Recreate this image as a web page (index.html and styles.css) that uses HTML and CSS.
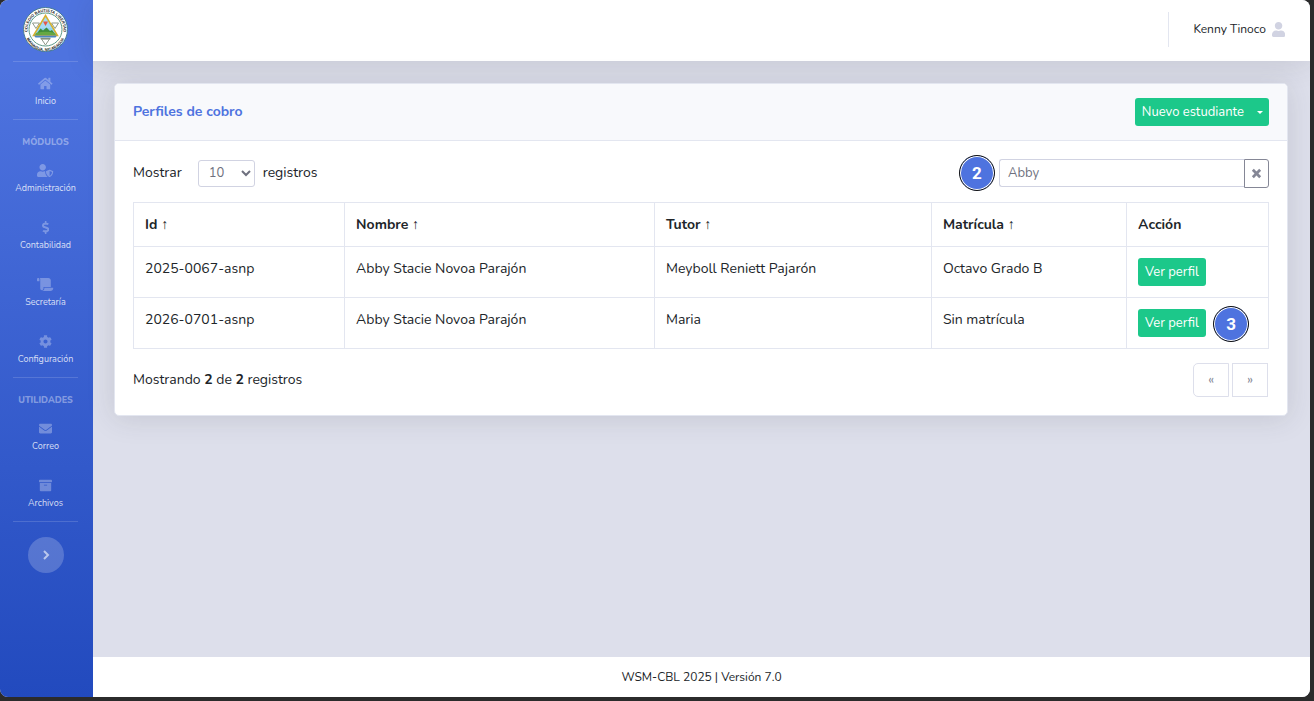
FILE: index.html
```html
<!DOCTYPE html>
<html lang="es">
<head>
<meta charset="utf-8">
<meta name="viewport" content="width=device-width, initial-scale=1">
<title>Perfiles de cobro</title>
<link rel="stylesheet" href="styles.css">
</head>
<body>
<div class="window">
  <nav class="sidebar" aria-label="Principal">
    <a class="brand" href="#" aria-label="Colegio Bautista Libertad">
      <svg class="crest" viewBox="0 0 90 90" aria-hidden="true">
        <defs>
          <path id="ring-top" d="M9.500 52a36 36 0 1 1 71 0"/>
          <path id="ring-bottom" d="M4 47a41 41 0 0 0 82 0"/>
        </defs>
        <circle cx="45" cy="45" r="44" fill="#fff" stroke="#497d94" stroke-width="2"/>
        <circle cx="45" cy="45" r="33" fill="#fff" stroke="#5e9987" stroke-width="2"/>
        <text class="crest-text"><textPath href="#ring-top" startOffset="50%" text-anchor="middle">COLEGIO BAUTISTA LIBERTAD</textPath></text>
        <text class="crest-text"><textPath href="#ring-bottom" startOffset="50%" text-anchor="middle">MANAGUA, NICARAGUA</textPath></text>
        <path d="M19 32h14l-7 11zM57 32h14l-7 11zM37 64h16l-8 12z" fill="#fff" stroke="#8f9a8c" stroke-width="2"/>
        <path d="M45 17L69 57H21z" fill="#8fd3f0" stroke="#d8b02c" stroke-width="3"/>
        <path d="M45 21l12 21H33z" fill="#a6daf3"/>
        <path d="M40 29h10l-5 9z" fill="#e3574d"/>
        <path d="M27 54l8-11 5 4 7-6 7 7 4-2 6 8z" fill="#3f8d3c"/>
        <path d="M26 52q19-5 38 0l2 4H24z" fill="#65a843"/>
        <path d="M22 57h46l-3 4H25z" fill="#4c87c2"/>
        <path d="M35 63h20" stroke="#82907e" stroke-width="3"/>
      </svg>
    </a>
    <hr class="rule">
    <a class="nav-item" href="#">
      <svg viewBox="0 0 576 512" aria-hidden="true"><path d="M280.370 148.260L96 300.110V464a16 16 0 0 0 16 16l112.060-.29a16 16 0 0 0 15.920-16V368a16 16 0 0 1 16-16h64a16 16 0 0 1 16 16v95.640a16 16 0 0 0 16 16.050L464 480a16 16 0 0 0 16-16V300L295.670 148.260a12.190 12.190 0 0 0-15.300 0zM571.600 251.470L488 182.560V44.050a12 12 0 0 0-12-12h-56a12 12 0 0 0-12 12v72.610L318.470 43a48 48 0 0 0-61 0L4.340 251.470a12 12 0 0 0-1.600 16.900l25.500 31A12 12 0 0 0 45.150 301l235.220-193.740a12.190 12.190 0 0 1 15.300 0L530.900 301a12 12 0 0 0 16.900-1.600l25.500-31a12 12 0 0 0-1.700-16.930z"/></svg>
      <span>Inicio</span>
    </a>
    <hr class="rule">
    <h2 class="nav-heading">Módulos</h2>
    <a class="nav-item" href="#">
      <svg viewBox="0 0 640 512" aria-hidden="true"><path d="M622.300 271.100l-115.200-45c-4.100-1.600-12.600-3.700-22.200 0l-115.200 45c-10.700 4.200-17.700 14-17.700 24.900 0 111.600 68.700 188.800 132.900 213.900 9.600 3.700 18 1.600 22.200 0C558.400 489.900 640 420.500 640 296c0-10.900-7-20.700-17.700-24.900zM496 462.400V273.300l95.500 37.300c-5.600 87.100-60.900 135.400-95.500 151.800zM224 256c70.700 0 128-57.300 128-128S294.700 0 224 0 96 57.300 96 128s57.300 128 128 128zm96 40c0-2.500.8-4.800 1.100-7.200-2.500-.1-4.900-.8-7.500-.8h-16.700c-22.200 10.200-46.900 16-72.900 16s-50.600-5.800-72.900-16h-16.700C60.200 288 0 348.200 0 422.400V464c0 26.500 21.500 48 48 48h352c6.800 0 13.300-1.500 19.200-4-54-42.900-99.200-116.700-99.200-212z"/></svg>
      <span>Administración</span>
    </a>
    <a class="nav-item" href="#">
      <svg viewBox="0 0 288 512" aria-hidden="true"><path d="M209.200 233.400l-108-31.600C88.700 198.200 80 186.500 80 173.500c0-16.300 13.200-29.500 29.500-29.500h66.300c12.200 0 24.200 3.700 34.200 10.500 6.100 4.100 14.300 3.100 19.500-2l34.800-34c7.100-6.900 6.100-18.400-1.800-24.500C238 74.800 207.400 64.100 176 64V16c0-8.800-7.200-16-16-16h-32c-8.800 0-16 7.200-16 16v48h-2.500C45.800 64-5.400 118.700.5 183.600c4.200 46.100 39.400 83.600 83.800 96.600l102.500 30c12.500 3.700 21.200 15.300 21.200 28.300 0 16.300-13.200 29.500-29.500 29.500h-66.300C100 368 88 364.300 78 357.500c-6.100-4.100-14.300-3.100-19.500 2l-34.800 34c-7.100 6.900-6.100 18.400 1.800 24.500 24.500 19.200 55.100 29.900 86.500 30v48c0 8.800 7.200 16 16 16h32c8.800 0 16-7.200 16-16v-48.200c46.600-.9 90.300-28.600 105.700-72.700 21.500-61.600-14.600-124.800-72.500-141.700z"/></svg>
      <span>Contabilidad</span>
    </a>
    <a class="nav-item" href="#">
      <svg viewBox="0 0 640 512" aria-hidden="true"><path d="M48 0C21.530 0 0 21.530 0 48v64c0 8.840 7.160 16 16 16h80V48C96 21.530 74.470 0 48 0zm208 412.570V352h288V96c0-52.940-43.060-96-96-96H111.590C121.740 13.410 128 29.920 128 48v368c0 38.870 34.650 69.650 74.750 63.120C234.220 474 256 444.460 256 412.570zM288 384v32c0 52.930-43.060 96-96 96h336c61.860 0 112-50.140 112-112 0-8.840-7.160-16-16-16H288z"/></svg>
      <span>Secretaría</span>
    </a>
    <a class="nav-item" href="#">
      <svg viewBox="0 0 512 512" aria-hidden="true"><path d="M487.400 315.700l-42.600-24.600c4.300-23.200 4.300-47 0-70.200l42.600-24.600c4.900-2.800 7.100-8.600 5.500-14-11.100-35.600-30-67.800-54.700-94.600-3.800-4.100-10-5.100-14.800-2.300L380.800 110c-17.900-15.400-38.500-27.300-60.800-35.100V25.800c0-5.600-3.900-10.500-9.400-11.700-36.700-8.200-74.300-7.800-109.200 0-5.500 1.200-9.400 6.100-9.400 11.700V75c-22.200 7.900-42.800 19.800-60.800 35.100L88.700 85.500c-4.900-2.800-11-1.900-14.800 2.300-24.700 26.700-43.600 58.900-54.700 94.600-1.700 5.400.6 11.200 5.500 14L67.300 221c-4.300 23.200-4.300 47 0 70.200l-42.600 24.600c-4.900 2.800-7.100 8.600-5.500 14 11.100 35.600 30 67.800 54.700 94.600 3.800 4.100 10 5.100 14.800 2.300l42.600-24.600c17.900 15.400 38.500 27.300 60.800 35.100v49.200c0 5.600 3.900 10.500 9.400 11.700 36.700 8.200 74.300 7.800 109.200 0 5.500-1.200 9.400-6.100 9.400-11.700v-49.200c22.200-7.900 42.800-19.800 60.800-35.100l42.600 24.600c4.900 2.800 11 1.900 14.800-2.300 24.700-26.700 43.600-58.900 54.700-94.600 1.500-5.500-.7-11.300-5.600-14.100zM256 336c-44.100 0-80-35.900-80-80s35.900-80 80-80 80 35.900 80 80-35.900 80-80 80z"/></svg>
      <span>Configuración</span>
    </a>
    <hr class="rule">
    <h2 class="nav-heading">Utilidades</h2>
    <a class="nav-item" href="#">
      <svg viewBox="0 0 512 512" aria-hidden="true"><path d="M502.300 190.800c3.900-3.100 9.700-.2 9.700 4.700V400c0 26.500-21.500 48-48 48H48c-26.500 0-48-21.500-48-48V195.600c0-5 5.700-7.800 9.700-4.700 22.400 17.400 52.100 39.500 154.100 113.600 21.100 15.400 56.700 47.800 92.200 47.600 35.700.3 72-32.800 92.300-47.600 102-74.100 131.600-96.300 154-113.700zM256 320c23.200.4 56.600-29.200 73.400-41.400 132.700-96.300 142.800-104.700 173.400-128.700 5.800-4.500 9.200-11.500 9.200-18.900v-19c0-26.500-21.500-48-48-48H48c-26.500 0-48 21.500-48 48v19c0 7.400 3.400 14.300 9.200 18.900 30.600 23.900 40.700 32.400 173.400 128.700 16.800 12.200 50.200 41.800 73.400 41.400z"/></svg>
      <span>Correo</span>
    </a>
    <a class="nav-item" href="#">
      <svg viewBox="0 0 512 512" aria-hidden="true"><path d="M32 448c0 17.700 14.300 32 32 32h384c17.700 0 32-14.300 32-32V160H32v288zm160-212c0-6.600 5.400-12 12-12h104c6.600 0 12 5.400 12 12v8c0 6.600-5.400 12-12 12H204c-6.600 0-12-5.400-12-12v-8zM480 32H32C14.300 32 0 46.300 0 64v48c0 8.800 7.200 16 16 16h480c8.800 0 16-7.200 16-16V64c0-17.700-14.300-32-32-32z"/></svg>
      <span>Archivos</span>
    </a>
    <hr class="rule">
    <button class="toggle" type="button" aria-label="Expandir menú">
      <svg viewBox="0 0 12 12" aria-hidden="true"><path d="M4 2l4 4-4 4"/></svg>
    </button>
  </nav>

  <div class="page">
    <header class="topbar">
      <a class="user" href="#">
        <span>Kenny Tinoco</span>
        <svg viewBox="0 0 448 512" aria-hidden="true"><path d="M224 256c70.700 0 128-57.300 128-128S294.700 0 224 0 96 57.300 96 128s57.300 128 128 128zm89.600 32h-16.700c-22.200 10.200-46.900 16-72.900 16s-50.600-5.800-72.900-16h-16.700C60.200 288 0 348.200 0 422.400V464c0 26.500 21.500 48 48 48h352c26.500 0 48-21.500 48-48v-41.600c0-74.200-60.200-134.400-134.400-134.400z"/></svg>
      </a>
    </header>

    <main class="content">
      <section class="card">
        <div class="card-header">
          <h1 class="card-title">Perfiles de cobro</h1>
          <div class="split">
            <button class="btn split-main" type="button">Nuevo estudiante</button>
            <button class="btn split-toggle" type="button" aria-label="Más opciones"><span class="caret"></span></button>
          </div>
        </div>
        <div class="card-body">
          <div class="controls">
            <div class="length">
              <label for="length">Mostrar</label>
              <select class="length-select" id="length"><option>10</option><option>25</option><option>50</option></select>
              <span>registros</span>
            </div>
            <div class="search">
              <span class="step">2</span>
              <input class="search-input" type="text" value="Abby" aria-label="Buscar">
              <button class="search-clear" type="button" aria-label="Limpiar">
                <svg viewBox="0 0 12 12" aria-hidden="true"><path d="M2 2l8 8M10 2l-8 8"/></svg>
              </button>
            </div>
          </div>
          <table class="grid">
            <colgroup><col class="col-id"><col class="col-name"><col class="col-tutor"><col class="col-enrol"><col class="col-action"></colgroup>
            <thead>
              <tr><th scope="col">Id <span class="sort">↑</span></th><th scope="col">Nombre <span class="sort">↑</span></th><th scope="col">Tutor <span class="sort">↑</span></th><th scope="col">Matrícula <span class="sort">↑</span></th><th scope="col">Acción</th></tr>
            </thead>
            <tbody>
              <tr><td>2025-0067-asnp</td><td>Abby Stacie Novoa Parajón</td><td>Meyboll Reniett Pajarón</td><td>Octavo Grado B</td><td><div class="action"><button class="btn" type="button">Ver perfil</button></div></td></tr>
              <tr><td>2026-0701-asnp</td><td>Abby Stacie Novoa Parajón</td><td>Maria</td><td>Sin matrícula</td><td><div class="action"><button class="btn" type="button">Ver perfil</button><span class="step step-inline">3</span></div></td></tr>
            </tbody>
          </table>
          <div class="summary">
            <p>Mostrando <b>2</b> de <b>2</b> registros</p>
            <div class="pager">
              <button type="button" class="page-btn" aria-label="Anterior">«</button>
              <button type="button" class="page-btn" aria-label="Siguiente">»</button>
            </div>
          </div>
        </div>
      </section>
    </main>

    <footer class="footer">WSM-CBL 2025 | Versión 7.0</footer>
  </div>
</div>
</body>
</html>
```
FILE: styles.css
```css
* { box-sizing: border-box; }

body {
  margin: 0;
  padding: 0 4px 4px 0;
  min-height: 100vh;
  display: flex;
  background: #2b2b2b;
  color: #212529;
  font-family: Nunito, "Open Sans", "Noto Sans", sans-serif;
  font-size: 14px;
  line-height: 22px;
}

button, input, select { font: inherit; }
a { color: inherit; text-decoration: none; }
h1, h2, p { margin: 0; }

.window {
  flex: 1;
  display: flex;
  overflow: hidden;
  border-radius: 8px;
  background: #dddfeb;
}

/* Sidebar */
.sidebar {
  width: 93px;
  padding-right: 2px;
  flex: none;
  display: flex;
  flex-direction: column;
  color: #fff;
  background: linear-gradient(180deg, #4e73df 10%, #224abe 100%);
}
.brand {
  height: 61px;
  padding-top: 7px;
  display: flex;
  justify-content: center;
}
.crest { width: 45px; height: 45px; }
.crest-text { font: bold 8px "Liberation Sans", sans-serif; fill: #222; }
.rule {
  width: 65px;
  height: 1px;
  margin: 0 auto;
  border: 0;
  background: rgba(255, 255, 255, 0.15);
}
.nav-item {
  height: 57px;
  padding-top: 15px;
  display: flex;
  flex-direction: column;
  align-items: center;
  gap: 4px;
  font-size: 9px;
  line-height: 14px;
  color: rgba(255, 255, 255, 0.8);
}
.nav-item svg { height: 13px; fill: rgba(255, 255, 255, 0.3); }
.nav-heading {
  padding-top: 15px;
  text-align: center;
  text-transform: uppercase;
  font-size: 9px;
  line-height: 14px;
  font-weight: 800;
  color: rgba(255, 255, 255, 0.4);
}
.toggle {
  width: 36px;
  height: 36px;
  margin: 15px auto;
  padding: 0;
  display: grid;
  place-items: center;
  border: 0;
  border-radius: 50%;
  background: rgba(255, 255, 255, 0.2);
}
.toggle svg { width: 12px; fill: none; stroke: rgba(255, 255, 255, 0.6); stroke-width: 2; }

/* Page frame */
.page { flex: 1; min-width: 0; display: flex; flex-direction: column; }
.topbar {
  height: 61px;
  padding: 0 25px;
  display: flex;
  justify-content: flex-end;
  align-items: center;
  background: #fff;
  box-shadow: 0 2px 28px rgba(58, 59, 69, 0.15);
}
.user {
  height: 35px;
  margin-bottom: 3px;
  padding-left: 24px;
  display: flex;
  align-items: center;
  gap: 6px;
  border-left: 1px solid #e3e6f0;
  font-size: 12px;
}
.user svg { height: 15px; fill: #d1d3e2; }
.content { flex: 1; padding: 22px 22px 22px 21px; }
.footer {
  height: 40px;
  display: grid;
  place-items: center;
  background: #fff;
  font-size: 12px;
}

/* Card */
.card {
  border: 1px solid #e3e6f0;
  border-radius: 5px;
  background: #fff;
  box-shadow: 0 2px 28px rgba(58, 59, 69, 0.15);
}
.card-header {
  padding: 14px 18px;
  display: flex;
  justify-content: space-between;
  align-items: center;
  border-bottom: 1px solid #e3e6f0;
  border-radius: 4px 4px 0 0;
  background: #f8f9fc;
}
.card-title { font-size: 14px; line-height: 22px; font-weight: 700; color: #4e73df; }
.card-body { padding: 18px; }

.btn {
  height: 28px;
  padding: 0 7px;
  border: 0;
  border-radius: 3px;
  background: #1cc88a;
  color: #fff;
  font-size: 13px;
  line-height: 26px;
}
.split { display: flex; }
.split-main { border-radius: 3px 0 0 3px; }
.split-toggle { padding: 0 6px; border-radius: 0 3px 3px 0; }
.caret {
  display: block;
  border: 3px solid transparent;
  border-top-color: #fff;
  border-bottom: 0;
}

.controls { display: flex; justify-content: space-between; align-items: center; height: 28px; }
.length { display: flex; align-items: center; gap: 8px; }
.length-select {
  width: 57px;
  height: 27px;
  margin-left: 8px;
  padding: 0 0 0 6px;
  border: 1px solid #d1d3e2;
  border-radius: 3px;
  background: #fff;
  color: #6e707e;
  font-size: 13px;
}
.search { display: flex; align-items: center; }
.step {
  width: 36px;
  height: 36px;
  margin-right: 4px;
  flex: none;
  display: grid;
  place-items: center;
  border: 1px solid #111;
  border-radius: 50%;
  background: #4e73df;
  box-shadow: inset 0 0 0 1px #fff;
  color: #fff;
  font: bold 17px/20px Roboto, sans-serif;
}
.search-input {
  width: 245px;
  height: 28px;
  padding: 0 8px;
  border: 1px solid #d1d3e2;
  border-right: 0;
  border-radius: 3px 0 0 3px;
  color: #6e707e;
  font-size: 13px;
}
.search-clear {
  width: 25px;
  height: 29px;
  padding: 0;
  display: grid;
  place-items: center;
  border: 1px solid #858796;
  border-radius: 0 3px 3px 0;
  background: #fff;
}
.search-clear svg { width: 11px; stroke: #858796; stroke-width: 3; }

.grid {
  width: 100%;
  margin-top: 15px;
  table-layout: fixed;
  border-collapse: collapse;
}
.grid th, .grid td {
  padding: 11px;
  border: 1px solid #e3e6f0;
  text-align: left;
  vertical-align: top;
}
.grid th { padding: 11px 11px 10px; }
.sort { font-weight: 400; }
.col-id { width: 18.6%; }
.col-name { width: 27.3%; }
.col-tutor { width: 24.4%; }
.col-enrol { width: 17.2%; }
.col-action { width: 12.5%; }
.action { position: relative; display: flex; }
.step-inline { position: absolute; left: 75px; top: -3px; }

.summary { margin-top: 14px; display: flex; justify-content: space-between; align-items: center; }
.pager { display: flex; gap: 3px; padding-right: 1px; }
.page-btn {
  width: 36px;
  height: 34px;
  padding: 0;
  border: 1px solid #dddfeb;
  background: #fff;
  color: #858796;
  font-size: 13px;
}
.page-btn:first-child { border-radius: 5px 0 0 5px; }
```
